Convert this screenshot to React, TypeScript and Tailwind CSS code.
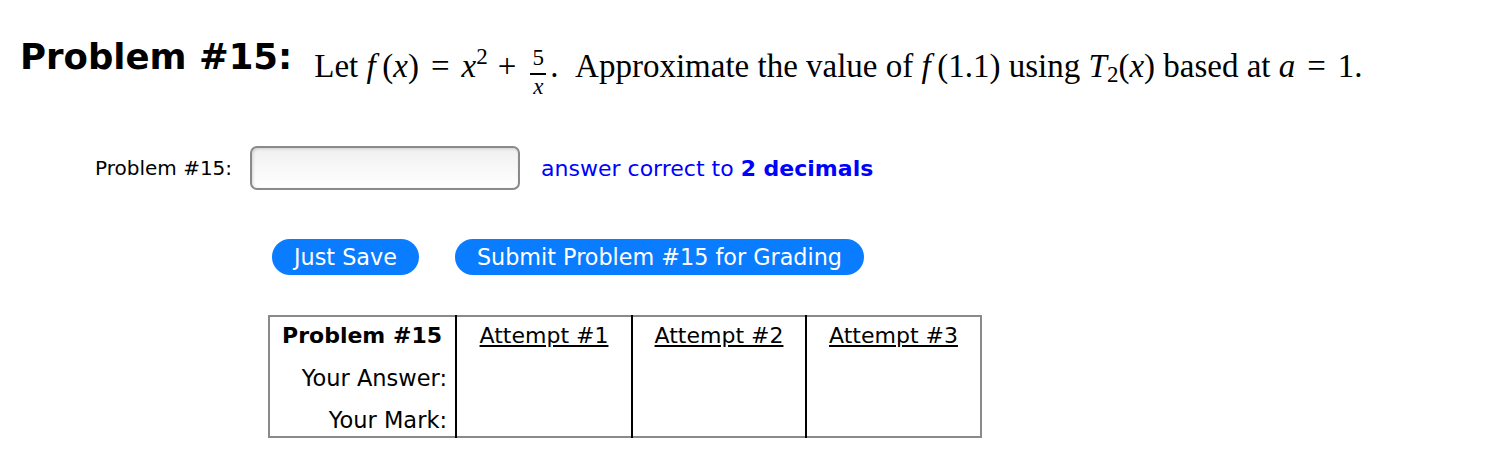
import React from "react";

const sans = { fontFamily: '"DejaVu Sans", Verdana, sans-serif' };
const serif = { fontFamily: '"Liberation Serif", "Times New Roman", serif' };

export default function App() {
  return (
    <div className="w-[1508px] h-[475px] bg-white text-black overflow-hidden">
      <div className="h-[130px] flex items-baseline pl-[20px] pt-[39px]">
        <span className="text-[35.5px] font-bold leading-none" style={sans}>
          Problem #15:
        </span>
        <span
          className="ml-[22px] text-[33px] leading-none flex items-baseline relative top-[8px]"
          style={serif}
        >
          <span>Let&nbsp;</span>
          <i>f</i>
          <span>&thinsp;(</span>
          <i>x</i>
          <span>)</span>
          <span className="mx-[12px]">=</span>
          <i>x</i>
          <span className="text-[23px] relative -top-[13px]">2</span>
          <span className="mx-[10px]">+</span>
          <span className="inline-flex flex-col items-center relative -top-[12px] text-[23px] leading-none mx-[4px] h-[23px]">
            <span>5</span>
            <span className="w-[16px] h-[2px] bg-black mt-[4px] shrink-0"></span>
            <i className="shrink-0">x</i>
          </span>
          <span>.&nbsp;&nbsp;Approximate the value of&nbsp;</span>
          <i>f</i>
          <span>&thinsp;(1.1) using&nbsp;</span>
          <i>T</i>
          <span className="text-[23px] relative top-[5px]">2</span>
          <span>(</span>
          <i>x</i>
          <span>) based at&nbsp;</span>
          <i>a</i>
          <span className="mx-[12px]">=</span>
          <span>1.</span>
        </span>
      </div>

      <div className="h-[76px] flex items-center pl-[95px]" style={sans}>
        <span className="text-[20px]">Problem #15:</span>
        <div className="ml-[18px] w-[270px] h-[44px] rounded-[7px] border-2 border-[#8a8a8a] bg-gradient-to-b from-[#f0f0f0] to-white shadow-[inset_1px_1px_3px_rgba(0,0,0,0.15)]"></div>
        <span className="ml-[21px] text-[22px] text-[#0000ff]">
          answer correct to <b>2 decimals</b>
        </span>
      </div>

      <div className="h-[102px] flex items-center pl-[272px] gap-[36px]" style={sans}>
        <button className="h-[36px] px-[22px] rounded-full bg-[#0a7cff] text-white text-[22.3px] leading-none">
          Just Save
        </button>
        <button className="h-[36px] px-[22px] rounded-full bg-[#0a7cff] text-white text-[22.3px] leading-none">
          Submit Problem #15 for Grading
        </button>
      </div>

      <div className="pl-[268px] mt-[7px]" style={sans}>
        <table className="border-2 border-[#8a8a8a] border-collapse text-[22px] leading-none">
          <tbody>
            <tr className="h-[39px]">
              <td className="w-[187px] text-right pr-[13px] font-bold border-r-2 border-black align-middle">
                Problem #15
              </td>
              <td className="w-[176px] text-center border-r-2 border-black underline align-middle">
                Attempt #1
              </td>
              <td className="w-[174px] text-center border-r-2 border-black underline align-middle">
                Attempt #2
              </td>
              <td className="w-[175px] text-center underline align-middle">Attempt #3</td>
            </tr>
            <tr className="h-[43px]">
              <td className="text-right pr-[8px] pt-[4px] border-r-2 border-black align-middle text-[22.5px]">
                Your Answer:
              </td>
              <td className="border-r-2 border-black"></td>
              <td className="border-r-2 border-black"></td>
              <td></td>
            </tr>
            <tr className="h-[39px]">
              <td className="text-right pr-[8px] pt-[6px] border-r-2 border-black align-middle text-[22.5px]">
                Your Mark:
              </td>
              <td className="border-r-2 border-black"></td>
              <td className="border-r-2 border-black"></td>
              <td></td>
            </tr>
          </tbody>
        </table>
      </div>
    </div>
  );
}
